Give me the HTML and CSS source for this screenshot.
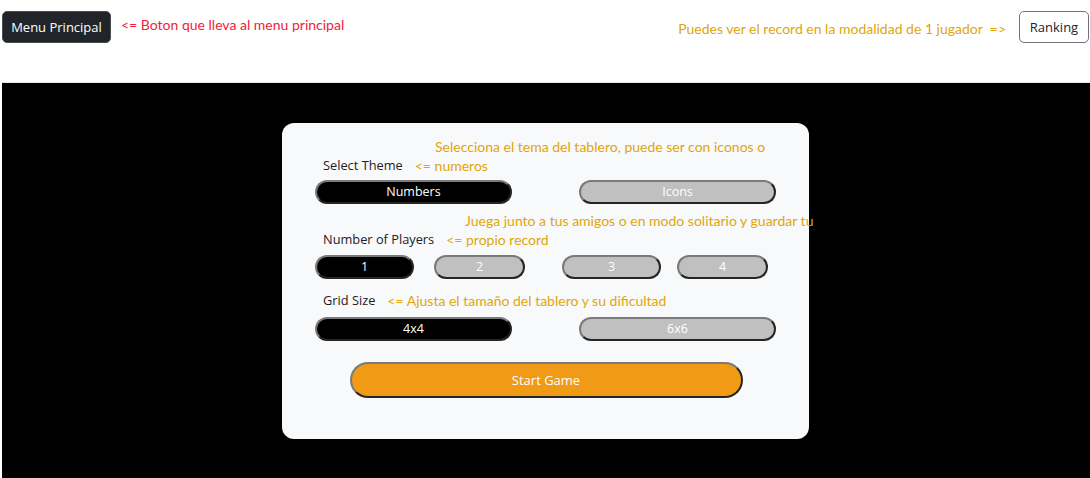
FILE: index.html
```html
<!DOCTYPE html>
<html lang="es">
<head>
<meta charset="utf-8">
<title>Memory</title>
<link rel="stylesheet" href="styles.css">
</head>
<body>
<header class="topbar">
  <div class="topbar-left">
    <button class="btn btn-dark">Menu Principal</button>
    <span class="note note-red">&lt;= Boton que lleva al menu principal</span>
  </div>
  <div class="topbar-right">
    <span class="note note-gold">Puedes ver el record en la modalidad de 1 jugador&nbsp; =&gt;</span>
    <button class="btn btn-outline">Ranking</button>
  </div>
</header>
<main class="stage">
  <section class="card">
    <div class="group">
      <div class="note note-gold note-top note-top-theme">Selecciona el tema del tablero, puede ser con iconos o</div>
      <div class="label-row">
        <span class="label">Select Theme</span>
        <span class="note note-gold">&lt;= numeros</span>
      </div>
      <div class="options two">
        <button class="opt opt-on">Numbers</button>
        <button class="opt opt-off">Icons</button>
      </div>
    </div>
    <div class="group group-players">
      <div class="note note-gold note-top note-top-players">Juega junto a tus amigos o en modo solitario y guardar tu</div>
      <div class="label-row">
        <span class="label">Number of Players</span>
        <span class="note note-gold">&lt;= propio record</span>
      </div>
      <div class="options players">
        <div class="half half-left">
          <button class="opt opt-on wide">1</button>
          <button class="opt opt-off narrow">2</button>
        </div>
        <div class="half half-right">
          <button class="opt opt-off wide">3</button>
          <button class="opt opt-off narrow">4</button>
        </div>
      </div>
    </div>
    <div class="group group-grid">
      <div class="label-row">
        <span class="label">Grid Size</span>
        <span class="note note-gold">&lt;= Ajusta el tamaño del tablero y su dificultad</span>
      </div>
      <div class="options two">
        <button class="opt opt-on">4x4</button>
        <button class="opt opt-off">6x6</button>
      </div>
    </div>
    <div class="start-wrap">
      <button class="start">Start Game</button>
    </div>
  </section>
</main>
</body>
</html>
```

FILE: styles.css
```css
* { box-sizing: border-box; }

html, body {
  margin: 0;
  padding: 0;
  background: #ffffff;
  font-family: "Open Sans", "Noto Sans", sans-serif;
  overflow: hidden;
}

.topbar {
  height: 82px;
  display: flex;
  justify-content: space-between;
  align-items: flex-start;
  padding: 11px 1px 0 2px;
}

.topbar-left, .topbar-right {
  display: flex;
  align-items: center;
}

.topbar-left { gap: 10px; }
.topbar-right { gap: 13px; }

.btn {
  height: 32px;
  border-radius: 5px;
  font-family: "Open Sans", sans-serif;
  font-size: 13px;
  padding: 0;
  line-height: 30px;
  white-space: nowrap;
  cursor: pointer;
}

.btn-dark {
  width: 109px;
  background: #212529;
  color: #ffffff;
  border: 1px solid #4a4f55;
}

.btn-outline {
  width: 70px;
  background: #ffffff;
  color: #212529;
  border: 1px solid #6c757d;
}

.note {
  font-family: "Lato", "Open Sans", sans-serif;
  font-size: 14px;
  white-space: nowrap;
}

.note-red { color: #f2213a; margin-top: -6px; }
.note-gold { color: #e0a60a; }
.topbar-right .note-gold { margin-top: 2px; }

.stage {
  margin-left: 2px;
  height: 396px;
  background: #000000;
  border-top: 1px solid #e6e6e6;
  display: flex;
  justify-content: center;
  align-items: flex-start;
  padding-top: 40px;
  padding-right: 1px;
}

.card {
  width: 527px;
  height: 316px;
  background: #f8f9fa;
  border-radius: 12px;
  padding: 15px 33px 0 33px;
}

.note-top {
  height: 18px;
  line-height: 18px;
}

.note-top-theme { margin-left: 120px; }
.note-top-players { margin-left: 150px; }

.label-row {
  display: flex;
  align-items: center;
  height: 18px;
  padding-left: 8px;
}

.label {
  font-family: "Open Sans", sans-serif;
  font-size: 12.8px;
  color: #1d2024;
  margin-right: 12px;
}

.group .options { margin-top: 6px; }

.group-players { margin-top: 8px; }
.group-players .options { margin-top: 7px; }

.group-grid { margin-top: 12px; }
.group-grid .options { margin-top: 8px; }

.options.two {
  display: flex;
  justify-content: space-between;
}

.opt {
  height: 24px;
  width: 197px;
  border-radius: 12px;
  border: 2px outset #7a7a7a;
  font-family: "Open Sans", sans-serif;
  font-size: 12.5px;
  color: #ffffff;
  padding: 0;
  line-height: 20px;
}

.opt-on { background: #000000; }
.opt-off { background: #c0c0c0; }

.options.players {
  display: grid;
  grid-template-columns: 247px 1fr;
}

.half { display: flex; }
.half-left { gap: 20px; }
.half-right { gap: 16px; }

.opt.wide { width: 99px; }
.opt.narrow { width: 91px; }

.start-wrap {
  margin-top: 21px;
  display: flex;
  justify-content: center;
  padding-left: 1px;
}

.start {
  width: 393px;
  height: 36px;
  border-radius: 18px;
  border: 2px outset #7a7a7a;
  background: #f09a16;
  color: #ffffff;
  font-family: "Open Sans", sans-serif;
  font-size: 13px;
  padding: 0;
}
```
